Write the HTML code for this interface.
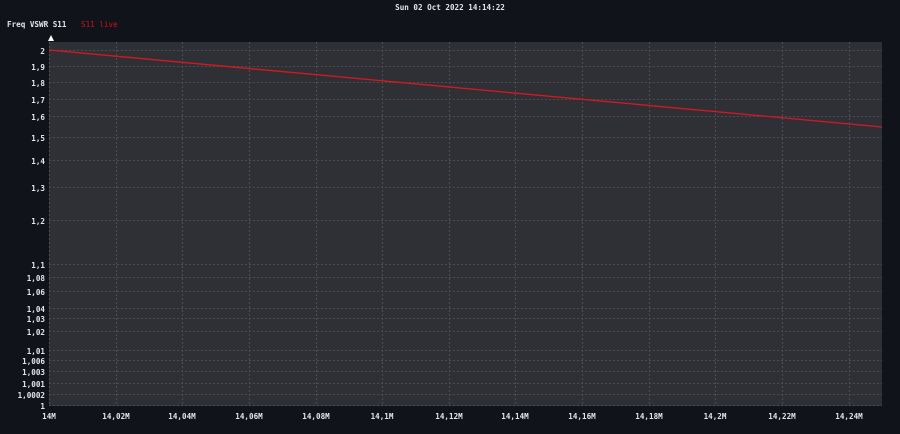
<!DOCTYPE html>
<html><head><style>
html,body{margin:0;padding:0;background:#10131a;}
svg{display:block}
text{font-family:"DejaVu Sans Mono","Liberation Mono",monospace;font-size:7.6px;font-weight:bold;fill:#e4e6ea}
</style></head><body>
<svg width="900" height="434" xmlns="http://www.w3.org/2000/svg">
<rect width="900" height="434" fill="#10131a"/>
<text x="450" y="10" text-anchor="middle">Sun 02 Oct 2022 14:14:22</text>
<text x="7" y="27">Freq VSWR S11</text>
<text x="81" y="27" style="fill:#d0101a;font-weight:normal">S11 live</text>
<polygon points="51,35 48,41 54,41" fill="#fff"/>
<rect x="49" y="42" width="833" height="364" fill="#2f3036"/>
<g stroke="#4c4e54" stroke-width="1" stroke-dasharray="2,2">
<line x1="49" x2="882" y1="50.5" y2="50.5"/><line x1="49" x2="882" y1="66.5" y2="66.5"/>
<line x1="49" x2="882" y1="82.5" y2="82.5"/><line x1="49" x2="882" y1="99.5" y2="99.5"/>
<line x1="49" x2="882" y1="116.5" y2="116.5"/><line x1="49" x2="882" y1="137.5" y2="137.5"/>
<line x1="49" x2="882" y1="160.5" y2="160.5"/><line x1="49" x2="882" y1="187.5" y2="187.5"/>
<line x1="49" x2="882" y1="220.5" y2="220.5"/><line x1="49" x2="882" y1="264.5" y2="264.5"/>
<line x1="49" x2="882" y1="277.5" y2="277.5"/><line x1="49" x2="882" y1="291.5" y2="291.5"/>
<line x1="49" x2="882" y1="308.5" y2="308.5"/><line x1="49" x2="882" y1="318.5" y2="318.5"/>
<line x1="49" x2="882" y1="331.5" y2="331.5"/><line x1="49" x2="882" y1="350.5" y2="350.5"/>
<line x1="49" x2="882" y1="360.5" y2="360.5"/><line x1="49" x2="882" y1="371.5" y2="371.5"/>
<line x1="49" x2="882" y1="383.5" y2="383.5"/><line x1="49" x2="882" y1="394.5" y2="394.5"/>
<line x1="49" x2="882" y1="405.5" y2="405.5"/>
<line y1="42" y2="406" x1="49.5" x2="49.5"/><line y1="42" y2="406" x1="116.5" x2="116.5"/>
<line y1="42" y2="406" x1="182.5" x2="182.5"/><line y1="42" y2="406" x1="249.5" x2="249.5"/>
<line y1="42" y2="406" x1="316.5" x2="316.5"/><line y1="42" y2="406" x1="382.5" x2="382.5"/>
<line y1="42" y2="406" x1="449.5" x2="449.5"/><line y1="42" y2="406" x1="515.5" x2="515.5"/>
<line y1="42" y2="406" x1="582.5" x2="582.5"/><line y1="42" y2="406" x1="649.5" x2="649.5"/>
<line y1="42" y2="406" x1="715.5" x2="715.5"/><line y1="42" y2="406" x1="782.5" x2="782.5"/>
<line y1="42" y2="406" x1="849.5" x2="849.5"/>
</g>
<line x1="49" y1="50" x2="882" y2="127" stroke="#d81820" stroke-width="1.3"/>
<g text-anchor="end">
<text x="45" y="54">2</text><text x="45" y="70">1,9</text><text x="45" y="86">1,8</text>
<text x="45" y="103">1,7</text><text x="45" y="120">1,6</text><text x="45" y="141">1,5</text>
<text x="45" y="164">1,4</text><text x="45" y="191">1,3</text><text x="45" y="224">1,2</text>
<text x="45" y="268">1,1</text><text x="45" y="281">1,08</text><text x="45" y="295">1,06</text>
<text x="45" y="312">1,04</text><text x="45" y="322">1,03</text><text x="45" y="335">1,02</text>
<text x="45" y="354">1,01</text><text x="45" y="364">1,006</text><text x="45" y="375">1,003</text>
<text x="45" y="387">1,001</text><text x="45" y="398">1,0002</text><text x="45" y="409">1</text>
</g>
<g text-anchor="middle">
<text x="49" y="419">14M</text><text x="116" y="419">14,02M</text><text x="182" y="419">14,04M</text>
<text x="249" y="419">14,06M</text><text x="316" y="419">14,08M</text><text x="382" y="419">14,1M</text>
<text x="449" y="419">14,12M</text><text x="515" y="419">14,14M</text><text x="582" y="419">14,16M</text>
<text x="649" y="419">14,18M</text><text x="715" y="419">14,2M</text><text x="782" y="419">14,22M</text>
<text x="849" y="419">14,24M</text>
</g>
</svg>
</body></html>
